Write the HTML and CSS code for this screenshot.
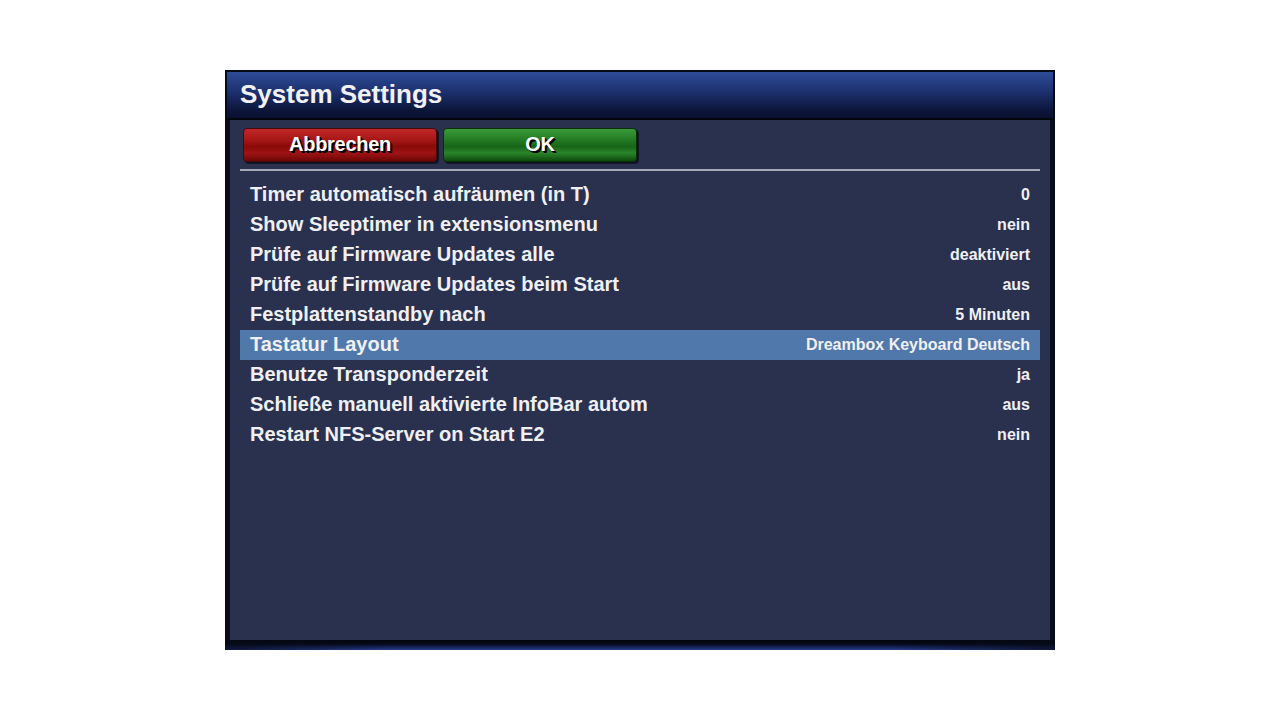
FILE: index.html
```html
<!DOCTYPE html>
<html>
<head>
<meta charset="utf-8">
<link rel="stylesheet" href="styles.css">
</head>
<body>
<div class="screen">
  <div class="window">
    <div class="titlebar"><span class="title">System Settings</span></div>
    <div class="sides">
      <div class="content">
        <div class="buttons">
          <div class="btn red"><span>Abbrechen</span></div>
          <div class="btn green"><span>OK</span></div>
        </div>
        <div class="sep"></div>
        <ul class="list">
          <li class="row"><span class="label">Timer automatisch aufräumen (in T)</span><span class="value">0</span></li>
          <li class="row"><span class="label">Show Sleeptimer in extensionsmenu</span><span class="value">nein</span></li>
          <li class="row"><span class="label">Prüfe auf Firmware Updates alle</span><span class="value">deaktiviert</span></li>
          <li class="row"><span class="label">Prüfe auf Firmware Updates beim Start</span><span class="value">aus</span></li>
          <li class="row"><span class="label">Festplattenstandby nach</span><span class="value">5 Minuten</span></li>
          <li class="row selected"><span class="label">Tastatur Layout</span><span class="value">Dreambox Keyboard Deutsch</span></li>
          <li class="row"><span class="label">Benutze Transponderzeit</span><span class="value">ja</span></li>
          <li class="row"><span class="label">Schließe manuell aktivierte InfoBar autom</span><span class="value">aus</span></li>
          <li class="row"><span class="label">Restart NFS-Server on Start E2</span><span class="value">nein</span></li>
        </ul>
      </div>
    </div>
    <div class="bottom"></div>
  </div>
</div>
</body>
</html>
```
FILE: styles.css
```css
html, body {
  margin: 0;
  padding: 0;
  background: #ffffff;
}
body {
  font-family: "Liberation Sans", Arial, sans-serif;
  color: #f0f0f4;
}
.screen {
  width: 1280px;
  height: 720px;
  display: flex;
  justify-content: center;
  padding-top: 70px;
  box-sizing: border-box;
}
.window {
  width: 830px;
  height: 580px;
  display: flex;
  flex-direction: column;
  background: #070b18;
}
.titlebar {
  height: 46px;
  margin: 2px 2px 0 2px;
  border-bottom: 2px solid #03050c;
  background: linear-gradient(180deg, #2d4c98 0%, #1c2f6c 45%, #0c1538 85%, #0a1030 100%);
  display: flex;
  align-items: center;
  padding-left: 13px;
}
.title {
  font-size: 26px;
  font-weight: bold;
  color: #f2f2f6;
  margin-top: -2px;
}
.sides {
  flex: 1;
  padding: 0 5px;
  display: flex;
  background: #080c1c;
}
.content {
  flex: 1;
  background: #29314f;
  padding: 8px 10px 0 10px;
}
.buttons {
  display: flex;
  gap: 6px;
  padding-left: 3px;
  height: 34px;
}
.btn {
  width: 194px;
  height: 34px;
  box-sizing: border-box;
  border-radius: 4px;
  display: flex;
  align-items: center;
  justify-content: center;
  box-shadow: 1px 1px 0 #0d1020, 2px 2px 0 rgba(0,0,0,0.5);
}
.btn span {
  font-size: 20px;
  font-weight: bold;
  color: #ffffff;
  text-shadow: 2px 2px 0 #000000, 1px 1px 0 #000;
  letter-spacing: -0.3px;
  margin-top: -2px;
}
.btn.red {
  background: linear-gradient(180deg, #c02828 0%, #a61616 35%, #8a0a0a 55%, #9e1414 75%, #6e0606 100%);
  border: 1px solid #4a0808;
}
.btn.green {
  background: linear-gradient(180deg, #3a9a3a 0%, #237a23 35%, #176517 55%, #2a852a 75%, #0e4a0e 100%);
  border: 1px solid #0a300a;
}
.sep {
  height: 2px;
  background: #a6a8b6;
  margin-top: 7px;
  margin-bottom: 9px;
}
.list {
  list-style: none;
  margin: 0;
  padding: 0;
}
.row {
  height: 30px;
  display: flex;
  align-items: center;
  justify-content: space-between;
  padding: 0 10px;
}
.row.selected {
  background: #5078ab;
}
.label {
  font-size: 20px;
  font-weight: bold;
  color: #f0f0f4;
  margin-top: -2px;
}
.value {
  font-size: 16px;
  font-weight: bold;
  color: #f0f0f4;
}
.bottom {
  height: 10px;
  background: linear-gradient(180deg, #03050c 0%, #060a1a 40%, #1a2a6a 80%, #2a3c8a 100%);
  -webkit-mask-image: linear-gradient(90deg, rgba(0,0,0,0.3), #000 20%, #000 80%, rgba(0,0,0,0.3));
}
```
